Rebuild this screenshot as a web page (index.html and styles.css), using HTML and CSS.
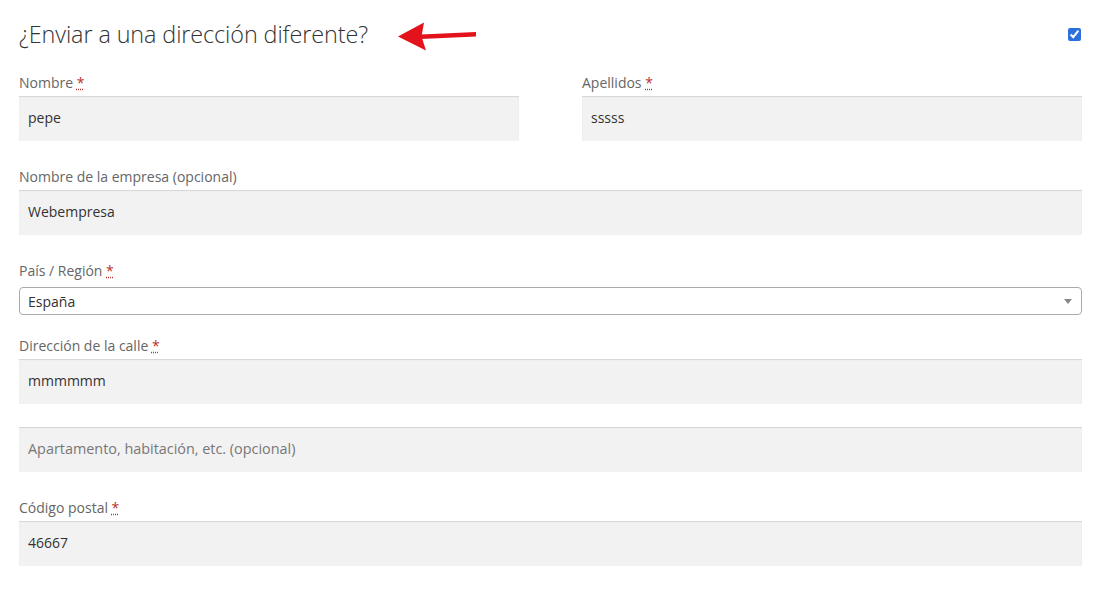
FILE: index.html
```html
<!DOCTYPE html>
<html lang="es">
<head>
<meta charset="utf-8">
<link rel="stylesheet" href="styles.css">
</head>
<body>
<form class="shipping">
  <div class="heading-row">
    <h3 class="heading">¿Enviar a una dirección diferente?</h3>
    <svg class="arrow" width="80" height="32" viewBox="0 0 80 32">
      <path d="M24 14.5 L79 12 L79 16.5 L24 19 Z" fill="#e3121b"/>
      <path d="M1 16.5 L27 2.5 L24.5 16.5 L29 30.5 Z" fill="#e3121b"/>
    </svg>
    <input class="check" type="checkbox" checked>
  </div>

  <div class="row two">
    <div class="field">
      <label class="label">Nombre <abbr class="req" title="obligatorio">*</abbr></label>
      <input class="input" type="text" value="pepe">
    </div>
    <div class="field">
      <label class="label">Apellidos <abbr class="req" title="obligatorio">*</abbr></label>
      <input class="input" type="text" value="sssss">
    </div>
  </div>

  <div class="field">
    <label class="label">Nombre de la empresa (opcional)</label>
    <input class="input" type="text" value="Webempresa">
  </div>

  <div class="field field-select">
    <label class="label">País / Región <abbr class="req" title="obligatorio">*</abbr></label>
    <div class="select">
      <span class="select-text">España</span>
      <span class="select-arrow"></span>
    </div>
  </div>

  <div class="field field-tight">
    <label class="label">Dirección de la calle <abbr class="req" title="obligatorio">*</abbr></label>
    <input class="input" type="text" value="mmmmmm">
  </div>

  <div class="field">
    <input class="input" type="text" placeholder="Apartamento, habitación, etc. (opcional)">
  </div>

  <div class="field">
    <label class="label">Código postal <abbr class="req" title="obligatorio">*</abbr></label>
    <input class="input" type="text" value="46667">
  </div>
</form>
</body>
</html>
```

FILE: styles.css
```css
html, body {
  margin: 0;
  padding: 0;
  background: #fff;
}
body {
  font-family: "Open Sans", "Liberation Sans", sans-serif;
  color: #43454b;
}
.shipping {
  width: 1063px;
  padding: 12px 0 0 19px;
}
.heading-row {
  display: flex;
  align-items: center;
  height: 44px;
  margin-bottom: 15px;
}
.heading {
  margin: 0;
  font-size: 23.4px;
  font-weight: 300;
  color: #333;
  letter-spacing: -0.1px;
}
.arrow {
  margin-left: 29px;
  margin-top: 3px;
}
.check {
  margin: 0 1px 0 auto;
  width: 13px;
  height: 13px;
  accent-color: #2c6fde;
}
.row.two {
  display: grid;
  grid-template-columns: 500px 500px;
  column-gap: 63px;
}
.field {
  display: flex;
  flex-direction: column;
  margin-bottom: 24px;
}
.label {
  font-size: 14px;
  line-height: 24px;
  color: #666;
  margin-bottom: 1px;
}
.req {
  color: #b8302a;
  text-decoration: underline dotted;
  text-decoration-color: #b8302a;
}
.input {
  box-sizing: border-box;
  height: 45px;
  border: 0;
  background: #f2f2f2;
  box-shadow: inset 0 1px 1px rgba(0, 0, 0, 0.12);
  padding: 0 9px 2px;
  font-family: "Open Sans", "Liberation Sans", sans-serif;
  font-size: 14px;
  color: #333;
  outline: none;
}
.input::placeholder {
  color: #777;
  font-size: 14.4px;
}
.field-select .label {
  margin-bottom: 4px;
}
.field-select {
  margin-bottom: 19px;
}
.field-tight {
  margin-bottom: 23px;
}
.select {
  box-sizing: border-box;
  height: 28px;
  border: 1px solid #aaa;
  border-radius: 4px;
  display: flex;
  align-items: center;
  padding: 0 8px;
  background: #fff;
}
.select-text {
  flex: 1;
  font-size: 14px;
  color: #333;
}
.select-arrow {
  width: 0;
  height: 0;
  border-left: 4px solid transparent;
  border-right: 4px solid transparent;
  border-top: 5px solid #888;
  margin-right: 1px;
}
```
